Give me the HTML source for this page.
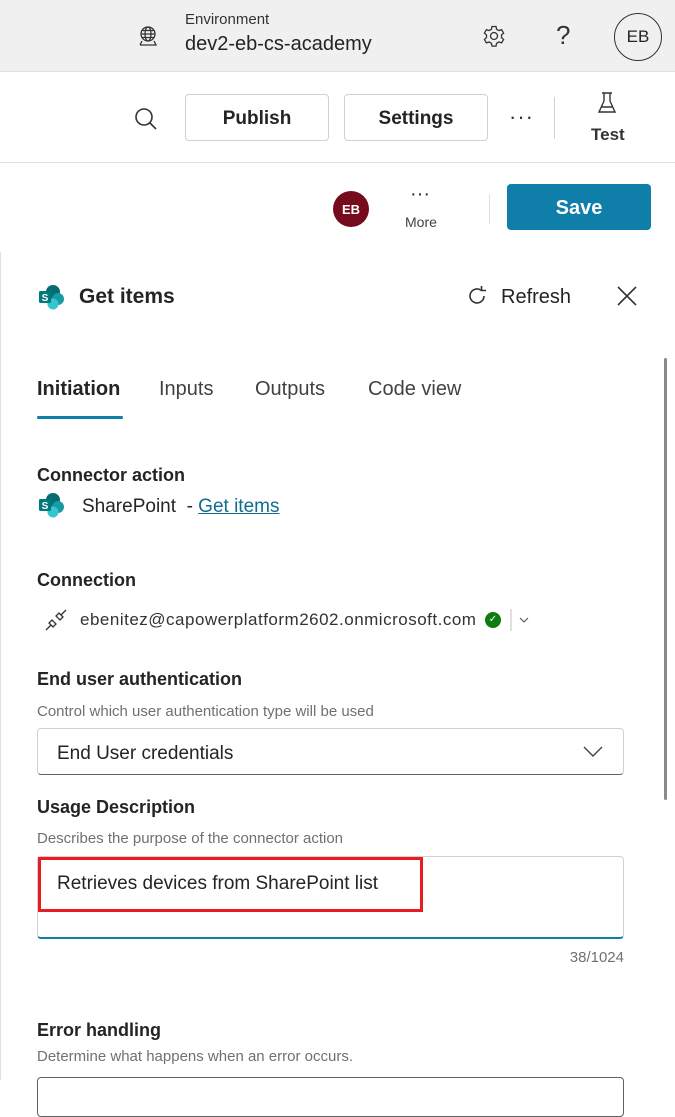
<!DOCTYPE html>
<html><head><meta charset="utf-8"><style>
*{margin:0;padding:0;box-sizing:border-box}
body{width:675px;height:1080px;overflow:hidden;background:#fff;font-family:"Liberation Sans",sans-serif;color:#242424;position:relative}
.a{position:absolute;white-space:nowrap}
.btn{position:absolute;border:1px solid #d1d1d1;border-radius:4px;background:#fff;font-size:19px;font-weight:bold;display:flex;align-items:center;justify-content:center}
.h{font-size:18px;font-weight:bold;color:#242424}
.sub{font-size:15px;color:#707070}
</style></head><body>
<div class="a" style="left:0;top:0;width:675px;height:72px;background:#f0f0f0;border-bottom:1px solid #e0e0e0"></div>
<svg class="a" style="left:136px;top:24px" width="24" height="24" viewBox="0 0 24 24" fill="none" stroke="#333" stroke-width="1.3"><circle cx="12" cy="10" r="7"/><ellipse cx="12" cy="10" rx="3" ry="7"/><path d="M5 10h14M6 6.5h12M6 13.5h12M4 21h16l-2-4M4 21l2-4"/></svg>
<div class="a" style="left:185px;top:11px;font-size:15px;color:#333">Environment</div>
<div class="a" style="left:185px;top:33px;font-size:20px;color:#242424">dev2-eb-cs-academy</div>
<svg class="a" style="left:482px;top:24px" width="24" height="24" viewBox="0 0 24 24" fill="none" stroke="#333" stroke-width="1.3"><circle cx="12" cy="12" r="3.5"/><path d="M10 2.5h4l.6 2.8 2.3 1.3 2.7-.9 2 3.4-2.1 1.9v2.6l2.1 1.9-2 3.4-2.7-.9-2.3 1.3-.6 2.8h-4l-.6-2.8-2.3-1.3-2.7.9-2-3.4 2.1-1.9v-2.6L2.4 9.1l2-3.4 2.7.9 2.3-1.3z"/></svg>
<div class="a" style="left:556px;top:20px;font-size:26px;color:#333;font-weight:300">?</div>
<div class="a" style="left:614px;top:13px;width:48px;height:48px;border:1px solid #333;border-radius:50%;display:flex;align-items:center;justify-content:center;font-size:17px;color:#242424">EB</div>
<div class="a" style="left:0;top:162px;width:675px;height:1px;background:#e0e0e0"></div>
<svg class="a" style="left:133px;top:106px" width="26" height="26" viewBox="0 0 26 26" fill="none" stroke="#333" stroke-width="1.6"><circle cx="11" cy="11" r="8"/><path d="M17 17l6 6"/></svg>
<div class="btn" style="left:185px;top:94px;width:144px;height:47px;padding-top:3px">Publish</div>
<div class="btn" style="left:344px;top:94px;width:144px;height:47px;padding-top:3px">Settings</div>
<div class="a" style="left:509px;top:104px;font-size:22px;color:#333;letter-spacing:1px">···</div>
<div class="a" style="left:554px;top:97px;width:1px;height:42px;background:#d1d1d1"></div>
<svg class="a" style="left:596px;top:90px" width="22" height="26" viewBox="0 0 22 26" fill="none" stroke="#333" stroke-width="1.4"><path d="M6 3h10M8 3v8l-5 11h16l-5-11V3M5 17h12"/></svg>
<div class="a" style="left:591px;top:125px;font-size:17px;font-weight:bold;color:#333">Test</div>
<div class="a" style="left:333px;top:191px;width:36px;height:36px;border-radius:50%;background:#750b1c;color:#fff;font-size:13px;font-weight:bold;display:flex;align-items:center;justify-content:center">EB</div>
<div class="a" style="left:410px;top:183px;font-size:20px;color:#333;letter-spacing:0px">···</div>
<div class="a" style="left:405px;top:214px;font-size:14px;color:#424242">More</div>
<div class="a" style="left:489px;top:194px;width:1px;height:30px;background:#e0e0e0"></div>
<div class="a" style="left:507px;top:184px;width:144px;height:46px;background:#0f7ea8;border-radius:4px;color:#fff;font-size:20px;font-weight:bold;display:flex;align-items:center;justify-content:center;padding-top:3px">Save</div>
<div class="a" style="left:0;top:252px;width:1px;height:828px;background:#e0e0e0"></div>
<div class="a" style="left:664px;top:358px;width:3px;height:442px;background:#8a8a8a;border-radius:2px"></div>
<svg class="a" style="left:38px;top:283px" width="28" height="28" viewBox="0 0 28 28"><circle cx="15" cy="9" r="7" fill="#036c70"/><circle cx="20" cy="16" r="6" fill="#1a9ba1"/><circle cx="15" cy="21" r="5.5" fill="#37c6d0"/><rect x="1" y="8" width="12" height="12" rx="1.5" fill="#03787c"/><text x="7" y="18" font-family="Liberation Sans" font-size="10" font-weight="bold" fill="#fff" text-anchor="middle">S</text></svg>
<div class="a" style="left:79px;top:285px;font-size:21px;font-weight:bold">Get items</div>
<svg class="a" style="left:465px;top:284px" width="24" height="24" viewBox="0 0 24 24" fill="none" stroke="#333" stroke-width="1.6"><path d="M19 12a7 7 0 1 1-3-5.8"/><path d="M16.5 2v4.5H21"/></svg>
<div class="a" style="left:501px;top:286px;font-size:20px;color:#242424">Refresh</div>
<svg class="a" style="left:616px;top:285px" width="22" height="22" viewBox="0 0 22 22" stroke="#333" stroke-width="1.6"><path d="M2 2l18 18M20 2L2 20"/></svg>
<div class="a" style="left:37px;top:378px;font-size:20px;font-weight:bold;color:#242424">Initiation</div>
<div class="a" style="left:159px;top:378px;font-size:20px;color:#424242">Inputs</div>
<div class="a" style="left:255px;top:378px;font-size:20px;color:#424242">Outputs</div>
<div class="a" style="left:368px;top:378px;font-size:20px;color:#424242">Code view</div>
<div class="a" style="left:37px;top:416px;width:86px;height:3px;background:#0f7ea8;border-radius:2px"></div>
<div class="a h" style="left:37px;top:465px">Connector action</div>
<svg class="a" style="left:38px;top:491px" width="28" height="28" viewBox="0 0 28 28"><circle cx="15" cy="9" r="7" fill="#036c70"/><circle cx="20" cy="16" r="6" fill="#1a9ba1"/><circle cx="15" cy="21" r="5.5" fill="#37c6d0"/><rect x="1" y="8" width="12" height="12" rx="1.5" fill="#03787c"/><text x="7" y="18" font-family="Liberation Sans" font-size="10" font-weight="bold" fill="#fff" text-anchor="middle">S</text></svg>
<div class="a" style="left:82px;top:496px;font-size:19px">SharePoint&nbsp; - <span style="color:#0f6c8f;text-decoration:underline">Get items</span></div>
<div class="a h" style="left:37px;top:570px">Connection</div>
<svg class="a" style="left:44px;top:608px" width="24" height="24" viewBox="0 0 24 24" fill="none" stroke="#333" stroke-width="1.3"><path d="M2 22l5-5M22 2l-5 5M7 17l-2-2 3-3 4 4-3 3zM17 7l2 2-3 3-4-4 3-3z"/></svg>
<div class="a" style="left:80px;top:610px;font-size:17px;letter-spacing:0.5px;color:#333">ebenitez@capowerplatform2602.onmicrosoft.com</div>
<div class="a" style="left:485px;top:612px;width:16px;height:16px;border-radius:50%;background:#107c10;color:#fff;font-size:10px;text-align:center;line-height:16px">✓</div>
<div class="a" style="left:510px;top:609px;width:2px;height:22px;background:#e0e0e0"></div>
<svg class="a" style="left:518px;top:614px" width="12" height="12" viewBox="0 0 12 12" fill="none" stroke="#555" stroke-width="1.1"><path d="M2 4l4 4 4-4"/></svg>
<div class="a h" style="left:37px;top:669px">End user authentication</div>
<div class="a sub" style="left:37px;top:703px">Control which user authentication type will be used</div>
<div class="a" style="left:37px;top:728px;width:587px;height:47px;border:1px solid #d1d1d1;border-bottom-color:#616161;border-radius:4px"></div>
<div class="a" style="left:57px;top:743px;font-size:19px">End User credentials</div>
<svg class="a" style="left:582px;top:742px" width="22" height="18" viewBox="0 0 22 18" fill="none" stroke="#424242" stroke-width="1.4"><path d="M2 5l9 9 9-9"/></svg>
<div class="a h" style="left:37px;top:797px">Usage Description</div>
<div class="a sub" style="left:37px;top:830px">Describes the purpose of the connector action</div>
<div class="a" style="left:37px;top:856px;width:587px;height:83px;border:1px solid #d1d1d1;border-bottom:2px solid #0f7ea8;border-radius:4px"></div>
<div class="a" style="left:38px;top:857px;width:385px;height:55px;border:3px solid #e81c23"></div>
<div class="a" style="left:57px;top:873px;font-size:19px">Retrieves devices from SharePoint list</div>
<div class="a" style="left:540px;top:949px;width:84px;text-align:right;font-size:15px;color:#707070">38/1024</div>
<div class="a h" style="left:37px;top:1020px">Error handling</div>
<div class="a sub" style="left:37px;top:1048px">Determine what happens when an error occurs.</div>
<div class="a" style="left:37px;top:1077px;width:587px;height:40px;border:1px solid #616161;border-radius:4px"></div>
</body></html>
